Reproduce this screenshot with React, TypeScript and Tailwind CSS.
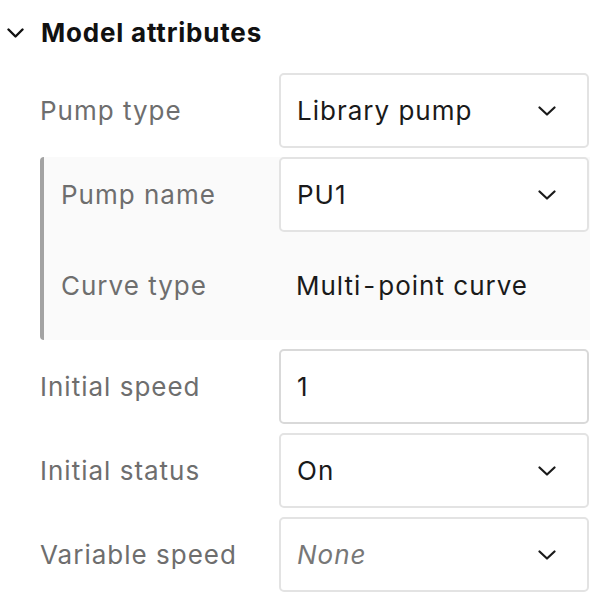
const FONT = { fontFamily: "Inter, 'Noto Sans', sans-serif" };

const Chevron = () => (
  <svg width="18" height="10" viewBox="0 0 18 10" fill="none" className="shrink-0">
    <path d="M1.5 1.5 9 8.5 16.5 1.5" stroke="#1a1a1a" strokeWidth="2.2" strokeLinecap="round" strokeLinejoin="round" />
  </svg>
);

const SelectBox = ({ value, placeholder }: { value: string; placeholder?: boolean }) => (
  <div className="flex h-[75px] w-[310px] items-center justify-between rounded-[5px] border-2 border-[#e3e3e3] bg-white pl-[16px] pr-[31px]">
    <span className={placeholder ? "italic text-[#777777]" : "text-[#1a1a1a]"}>{value}</span>
    <Chevron />
  </div>
);

const InputBox = ({ value }: { value: string }) => (
  <div className="flex h-[75px] w-[310px] items-center rounded-[5px] border-2 border-[#d9d9d9] bg-white pl-[16px]">
    <span className="text-[#1a1a1a]">{value}</span>
  </div>
);

const Row = ({ label, children, labelWidth = "w-[239px]" }: { label: string; children: React.ReactNode; labelWidth?: string }) => (
  <div className="flex items-center">
    <span className={`${labelWidth} shrink-0 text-[#6e6e6e]`}>{label}</span>
    {children}
  </div>
);

export default function App() {
  return (
    <div className="h-[608px] w-[590px] bg-white text-[26px] leading-none tracking-[1px]" style={FONT}>
      <div className="flex items-center gap-[17px] pl-[7px] pt-[19px]">
        <svg width="17" height="10" viewBox="0 0 17 10" fill="none">
          <path d="M1.5 1.5 8.5 8.5 15.5 1.5" stroke="#111" strokeWidth="2.4" strokeLinecap="round" strokeLinejoin="round" />
        </svg>
        <h2 className="text-[26px] font-bold leading-[28px] tracking-[0.8px] text-[#111111]">Model attributes</h2>
      </div>

      <div className="mt-[26px] flex flex-col gap-[9px] pl-[40px]">
        <Row label="Pump type">
          <SelectBox value="Library pump" />
        </Row>

        <div className="flex flex-col rounded-l-[4px] border-l-4 border-[#a3a3a3] bg-[#fafafa] pl-[17px]">
          <Row label="Pump name" labelWidth="w-[218px]">
            <SelectBox value="PU1" />
          </Row>
          <div className="flex h-[108px] items-center">
            <span className="w-[218px] shrink-0 text-[#6e6e6e]">Curve type</span>
            <span className="pl-[17px] text-[#1a1a1a]">
              Multi<span className="mx-[2px]">-</span>point curve
            </span>
          </div>
        </div>

        <Row label="Initial speed">
          <InputBox value="1" />
        </Row>
        <Row label="Initial status">
          <SelectBox value="On" />
        </Row>
        <Row label="Variable speed">
          <SelectBox value="None" placeholder />
        </Row>
      </div>
    </div>
  );
}
